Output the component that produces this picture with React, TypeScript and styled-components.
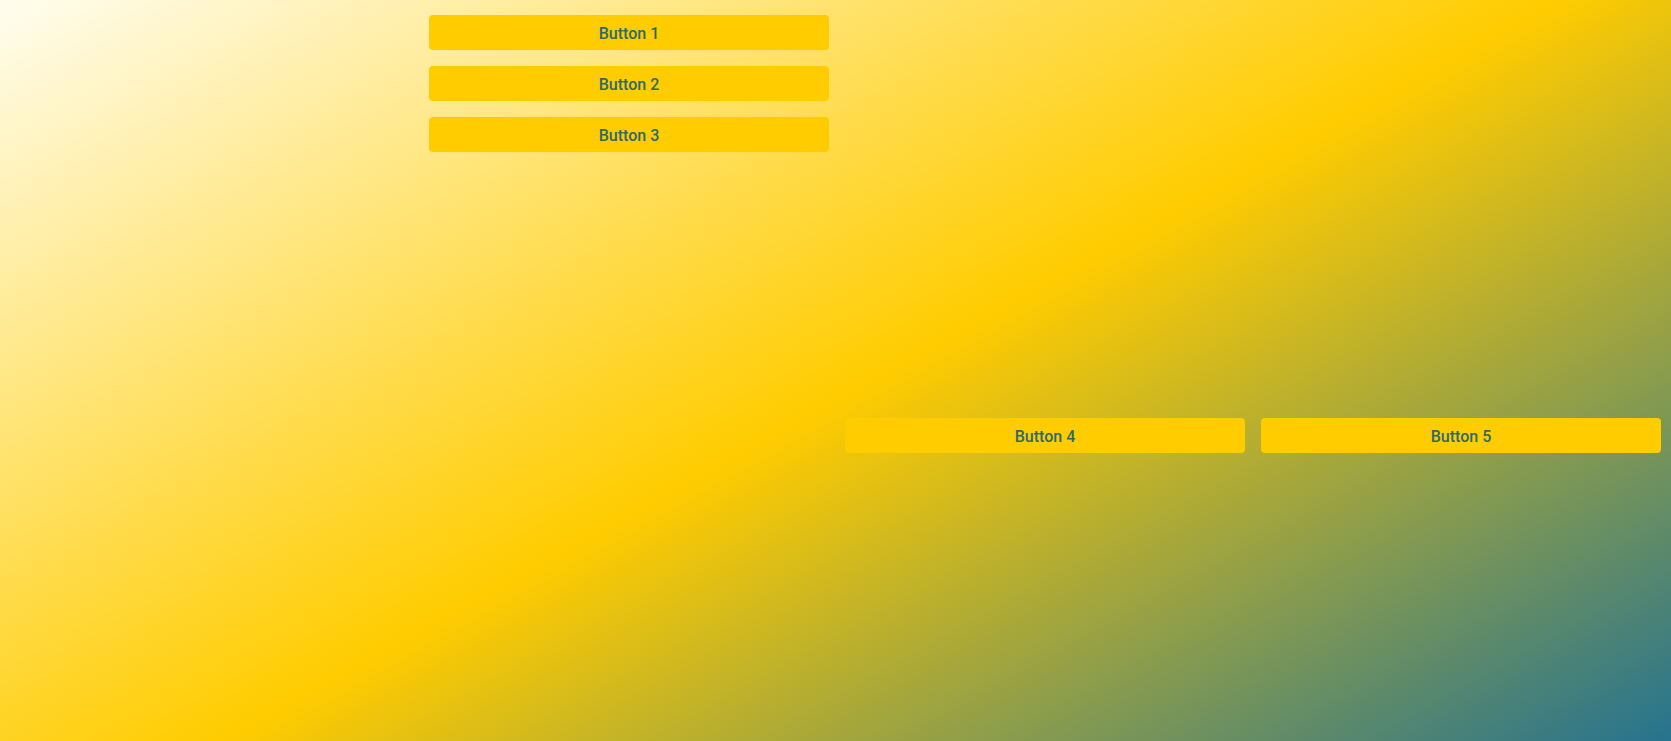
import React from "react";
import styled, { createGlobalStyle } from "styled-components";

const GlobalStyle = createGlobalStyle`
  html, body {
    margin: 0;
    padding: 0;
  }
  body {
    font-family: Roboto, "Liberation Sans", Arial, sans-serif;
    background: linear-gradient(151deg, #fffdf0 0%, #ffcc00 51.8%, #26738f 100%);
    background-attachment: fixed;
  }
`;

const Page = styled.div`
  display: grid;
  grid-template-columns: repeat(4, 1fr);
  grid-template-rows: 403px auto;
  column-gap: 16px;
  padding: 15px 10px 0 13px;
  box-sizing: border-box;
  width: 100%;
  height: 100vh;
  overflow: hidden;
  align-content: start;
`;

const Stack = styled.div`
  grid-column: 2;
  grid-row: 1;
  display: flex;
  flex-direction: column;
  gap: 16px;
  align-self: start;
`;

const Button = styled.button<{ $col?: number }>`
  ${(p) => (p.$col ? `grid-column: ${p.$col}; grid-row: 2; align-self: start;` : "")}
  height: 35px;
  border: none;
  border-radius: 4px;
  background: #ffcc00;
  color: #2c6a6c;
  font-family: Roboto, "Liberation Sans", Arial, sans-serif;
  font-size: 16px;
  font-weight: 500;
  cursor: pointer;
  padding: 2px 0 0;
`;

export default function App() {
  return (
    <>
      <GlobalStyle />
      <Page>
        <Stack>
          <Button>Button 1</Button>
          <Button>Button 2</Button>
          <Button>Button 3</Button>
        </Stack>
        <Button $col={3}>Button 4</Button>
        <Button $col={4}>Button 5</Button>
      </Page>
    </>
  );
}
